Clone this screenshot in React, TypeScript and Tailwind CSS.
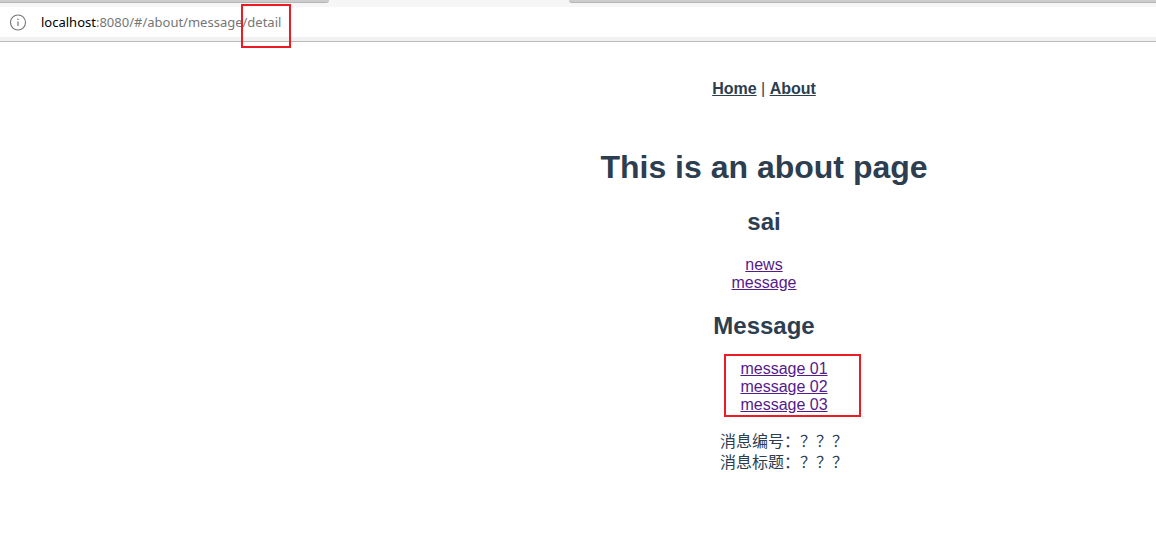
import React from "react";

const messages = ["message 01", "message 02", "message 03"];
const details = ["消息编号：？？？", "消息标题：？？？"];

function AddressBar() {
  return (
    <header className="border-b border-[#bababa] bg-[#f1f1f1] pb-1">
      <div className="flex h-[7px] items-start bg-[#f6f6f6]">
        <div className="h-[3px] w-[329px] rounded-br-sm border-b border-[#b5b5b5] bg-[#cccccc]" />
        <div className="w-60" />
        <div className="h-[3px] flex-1 rounded-bl-sm border-b border-[#b5b5b5] bg-[#cccccc]" />
      </div>
      <div className="flex h-[30px] items-center gap-3.5 bg-white pl-2.5 font-['Noto_Sans',sans-serif] text-[13px] leading-5">
        <svg className="size-[17px] shrink-0" viewBox="0 0 17 17" fill="none" aria-hidden="true">
          <circle cx="8" cy="8.5" r="7.5" stroke="#767676" strokeWidth="1.1" />
          <path d="M8 7.5v4.5" stroke="#767676" strokeWidth="1.2" />
          <circle cx="8" cy="5.3" r="0.8" fill="#767676" />
        </svg>
        <p className="whitespace-nowrap text-[#767676]">
          <span className="text-black">localhost</span>:8080/#/about/message
          <span className="relative inline-block">
            /detail
            <span className="absolute -top-2 -left-0.5 h-11 w-[50px] border-2 border-[#ed1c24]" />
          </span>
        </p>
      </div>
    </header>
  );
}

export default function App() {
  return (
    <div className="min-h-screen bg-white font-['Liberation_Sans','Noto_Sans_CJK_SC',sans-serif] text-base leading-[18px] text-[#2c3e50]">
      <AddressBar />
      <main className="flex flex-col pt-[38px] pb-10 pl-[372px] text-center">
        <nav className="font-bold">
          <a href="#/" className="underline">Home</a>
          <span className="font-normal"> | </span>
          <a href="#/about" className="underline">About</a>
        </nav>
        <h1 className="mt-[51px] text-[32px] leading-9 font-bold">This is an about page</h1>
        <h2 className="mt-[23px] text-2xl leading-7 font-bold">sai</h2>
        <ul className="mt-5 text-[#551a8b]">
          <li><a href="#/about/news" className="underline">news</a></li>
          <li><a href="#/about/message" className="underline">message</a></li>
        </ul>
        <h2 className="mt-5 text-2xl leading-7 font-bold">Message</h2>
        <div className="relative mt-5 self-center pl-10 text-[#551a8b]">
          <ul>
            {messages.map((message) => (
              <li key={message}>
                <a href="#/about/message/detail" className="underline">{message}</a>
              </li>
            ))}
          </ul>
          <div className="pointer-events-none absolute -top-1.5 left-6 h-[63px] w-[137px] border-2 border-[#ed1c24]" />
        </div>
        <ul className="mt-4 pl-10 font-['Noto_Sans_CJK_SC',sans-serif] leading-[21px]">
          {details.map((detail) => (
            <li key={detail}>{detail}</li>
          ))}
        </ul>
      </main>
    </div>
  );
}
